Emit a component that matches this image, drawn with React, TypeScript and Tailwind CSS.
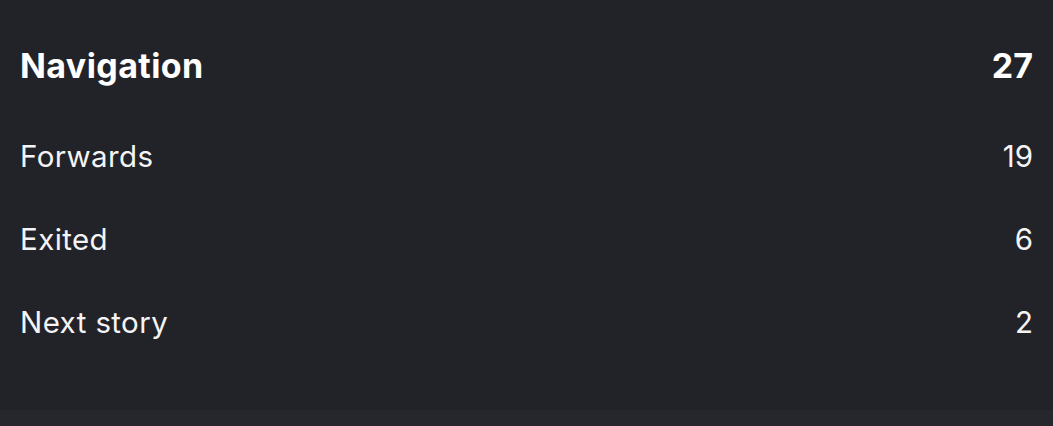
const rows = [
  { label: "Forwards", value: 19 },
  { label: "Exited", value: 6 },
  { label: "Next story", value: 2 },
];

export default function App() {
  return (
    <div
      className="w-[1053px] h-[426px] bg-[#222328] text-white flex flex-col overflow-hidden"
      style={{ fontFamily: "Inter, 'Noto Sans', sans-serif" }}
    >
      <div className="px-5 pt-[24px] pb-[46px]">
        <div className="h-[83px] mb-2 flex items-center justify-between">
          <span className="text-[34px] font-bold tracking-[0.4px]">Navigation</span>
          <span className="text-[34px] font-bold">27</span>
        </div>
        {rows.map((row) => (
          <div key={row.label} className="h-[83px] flex items-center justify-between">
            <span className="text-[29.5px] tracking-[0.4px] text-[#f4f4f5]">{row.label}</span>
            <span className="text-[29.5px] text-[#f4f4f5]">{row.value}</span>
          </div>
        ))}
      </div>
      <div className="flex-1 bg-[#25272c]" />
    </div>
  );
}
